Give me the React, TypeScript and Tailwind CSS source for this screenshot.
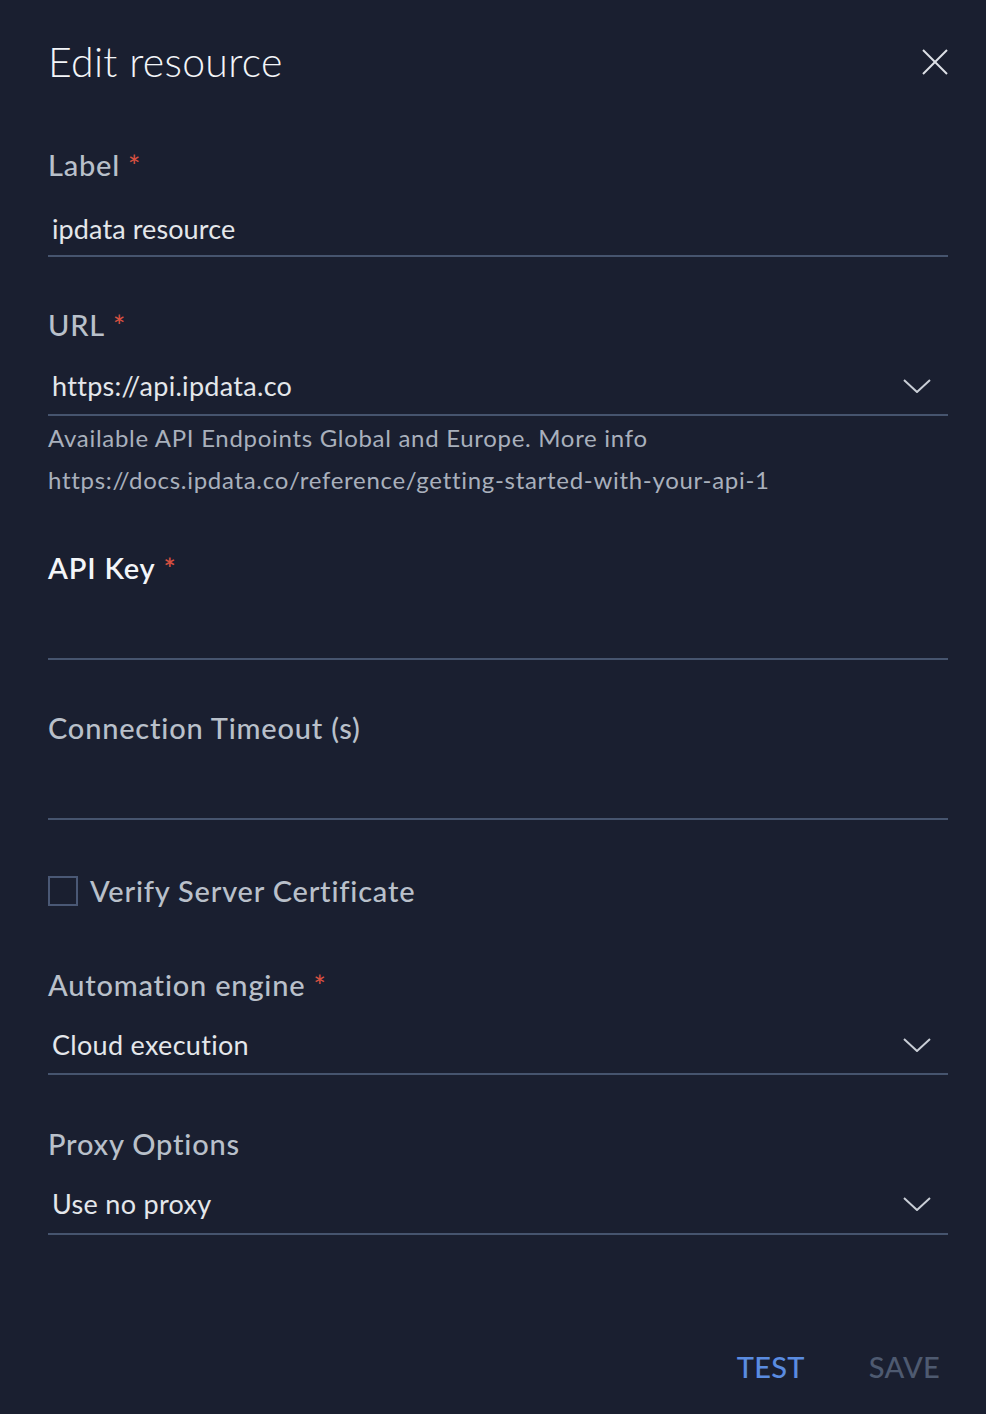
import { ReactNode } from "react"

const font = { fontFamily: "Lato, 'Open Sans', sans-serif" }

function Req() {
  return <span className="ml-[8px] text-[#d65040]">*</span>
}

function Chevron() {
  return (
    <svg width="28" height="14" viewBox="0 0 28 14" fill="none" className="shrink-0">
      <polyline points="1,1 14,13 27,1" stroke="#c9ced6" strokeWidth="2" strokeLinejoin="round" />
    </svg>
  )
}

function FieldLabel({ children, bright, className }: { children: ReactNode; bright?: boolean; className?: string }) {
  return (
    <div
      className={`h-[40px] leading-[40px] text-[29px] tracking-[0.8px] ${
        bright ? "font-semibold text-[#f3f5f8]" : "font-medium text-[#b9c0ca]"
      } ${className ?? ""}`}
    >
      {children}
    </div>
  )
}

function Select({ value, pt, pb }: { value: string; pt: string; pb: string }) {
  return (
    <div className={`flex items-center justify-between border-b-2 border-[#46546e] pl-[4px] pr-[17px] ${pt} ${pb}`}>
      <span className="leading-[36px] text-[27px] tracking-[0.3px] text-[#e4e7eb]">{value}</span>
      <Chevron />
    </div>
  )
}

export default function App() {
  return (
    <div className="min-h-[1414px] w-full bg-[#1a1f30]" style={font}>
      <div className="flex flex-col pl-[48px] pr-[38px] pt-[38px]">
        <div className="flex h-[48px] items-center justify-between">
          <h1 className="text-[41px] font-light leading-[48px] tracking-[0.3px] text-[#f3f5f8]">Edit resource</h1>
          <button>
            <svg width="26" height="26" viewBox="0 0 26 26" fill="none">
              <line x1="1" y1="1" x2="25" y2="25" stroke="#dde1e7" strokeWidth="2" />
              <line x1="25" y1="1" x2="1" y2="25" stroke="#dde1e7" strokeWidth="2" />
            </svg>
          </button>
        </div>

        <FieldLabel className="mt-[59px]">
          Label
          <Req />
        </FieldLabel>
        <div className="border-b-2 border-[#46546e] pl-[4px] pt-[26px] pb-[8px]">
          <span className="block leading-[36px] text-[27px] tracking-[0.1px] text-[#e4e7eb]">ipdata resource</span>
        </div>

        <FieldLabel className="mt-[48px]">
          URL
          <Req />
        </FieldLabel>
        <Select value="https://api.ipdata.co" pt="pt-[23px]" pb="pb-[10px]" />
        <div className="mt-[1px] text-[24px] leading-[42px] tracking-[0.7px] text-[#a9b0bc]">
          <p>Available API Endpoints Global and Europe. More info</p>
          <p>https://docs.ipdata.co/reference/getting-started-with-your-api-1</p>
        </div>

        <FieldLabel bright className="mt-[47px]">
          API Key
          <Req />
        </FieldLabel>
        <div className="h-[72px] border-b-2 border-[#46546e]" />

        <FieldLabel className="mt-[48px]">Connection Timeout (s)</FieldLabel>
        <div className="h-[72px] border-b-2 border-[#46546e]" />

        <label className="mt-[56px] flex h-[30px] items-center gap-[12px]">
          <span className="h-[30px] w-[30px] shrink-0 border-2 border-[#4a5875]" />
          <span className="text-[29px] font-medium tracking-[0.8px] text-[#b9c0ca]">Verify Server Certificate</span>
        </label>

        <FieldLabel className="mt-[59px]">
          Automation engine
          <Req />
        </FieldLabel>
        <Select value="Cloud execution" pt="pt-[22px]" pb="pb-[10px]" />

        <FieldLabel className="mt-[49px]">Proxy Options</FieldLabel>
        <Select value="Use no proxy" pt="pt-[22px]" pb="pb-[11px]" />

        <div className="mt-[112px] flex h-[40px] items-center justify-end gap-[64px] pr-[8px]">
          <button className="text-[29px] font-medium leading-[40px] tracking-[0.3px] text-[#5a8ce1]">TEST</button>
          <button className="text-[29px] font-medium leading-[40px] tracking-[0.3px] text-[#4e5a70]">SAVE</button>
        </div>
      </div>
    </div>
  )
}
